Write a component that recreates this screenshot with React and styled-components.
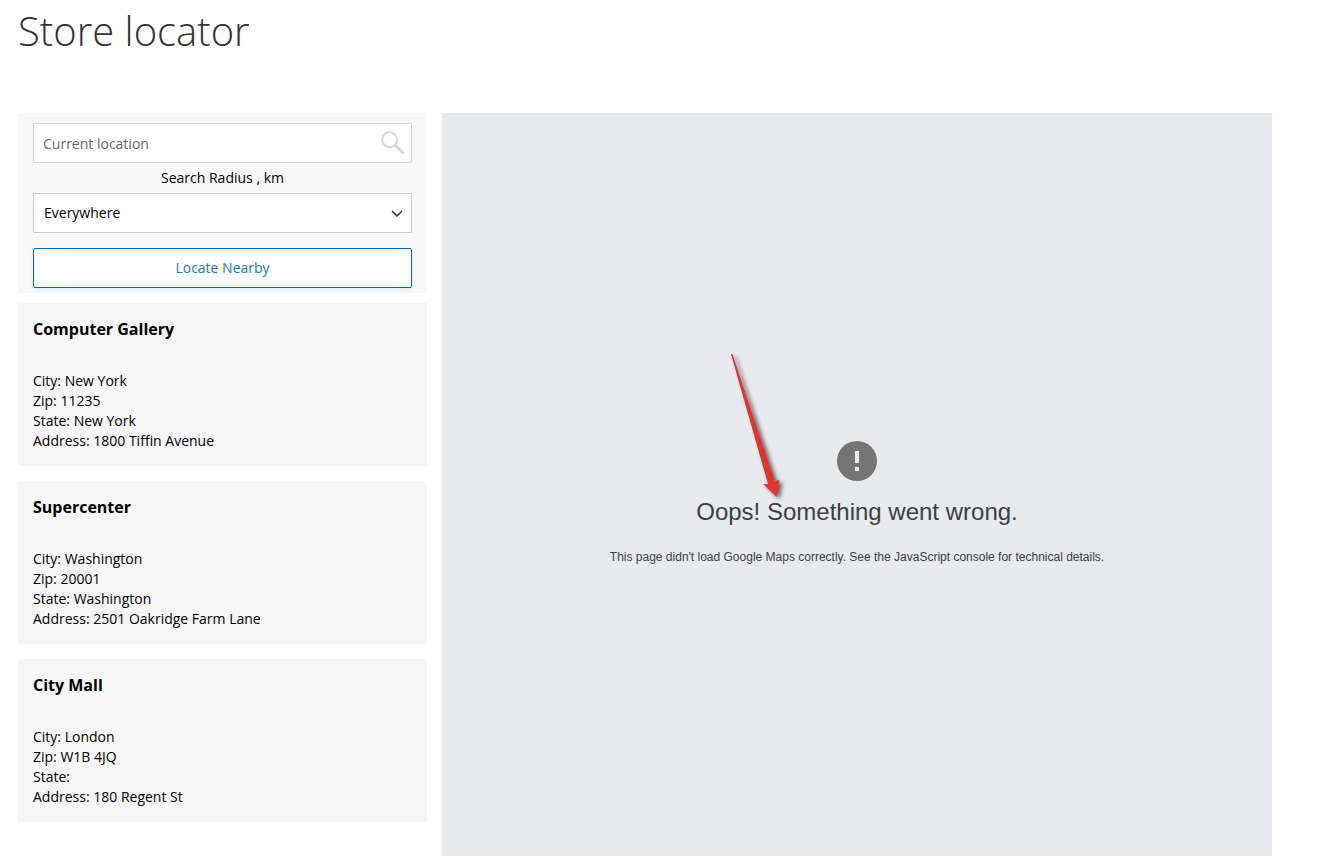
import { useState } from "react";
import styled, { createGlobalStyle } from "styled-components";

const stores = [
  { name: "Computer Gallery", city: "New York", zip: "11235", state: "New York", address: "1800 Tiffin Avenue" },
  { name: "Supercenter", city: "Washington", zip: "20001", state: "Washington", address: "2501 Oakridge Farm Lane" },
  { name: "City Mall", city: "London", zip: "W1B 4JQ", state: "", address: "180 Regent St" },
];

export default function App() {
  const [location, setLocation] = useState("");

  return (
    <Page>
      <GlobalStyle />
      <Title>Store locator</Title>
      <Content>
        <Sidebar>
          <SearchForm onSubmit={(e) => e.preventDefault()}>
            <SearchField>
              <SearchInput
                type="text"
                aria-label="Current location"
                placeholder="Current location"
                value={location}
                onChange={(e) => setLocation(e.target.value)}
              />
              <SearchButton type="submit" aria-label="Search">
                <svg width="24" height="24" viewBox="0 0 24 24" fill="none" stroke="#d6d6d6">
                  <circle cx="8.7" cy="8.7" r="7.5" strokeWidth="2" />
                  <path d="M14 14L22.5 22.3" strokeWidth="3" />
                </svg>
              </SearchButton>
            </SearchField>
            <RadiusLabel htmlFor="radius">Search Radius , km</RadiusLabel>
            <SelectField>
              <Select id="radius" defaultValue="all">
                <option value="all">Everywhere</option>
                <option value="10">10</option>
                <option value="50">50</option>
              </Select>
              <svg width="12" height="8" viewBox="0 0 12 8" fill="none" stroke="#333" strokeWidth="1.5">
                <path d="M1 2L6 7L11 2" />
              </svg>
            </SelectField>
            <LocateButton type="button">Locate Nearby</LocateButton>
          </SearchForm>
          <StoreList>
            {stores.map((store) => (
              <StoreCard key={store.name}>
                <h2>{store.name}</h2>
                <p>City: {store.city}</p>
                <p>Zip: {store.zip}</p>
                <p>State: {store.state}</p>
                <p>Address: {store.address}</p>
              </StoreCard>
            ))}
          </StoreList>
        </Sidebar>
        <Map>
          <MapError>
            <svg width="40" height="40" viewBox="0 0 40 40">
              <circle cx="20" cy="20" r="20" fill="#757575" />
              <path d="M18 10h4v12h-4zM18 26h4v4h-4z" fill="#e8eaed" />
            </svg>
            <h2>Oops! Something went wrong.</h2>
            <p>This page didn't load Google Maps correctly. See the JavaScript console for technical details.</p>
            <Arrow width="60" height="154" viewBox="0 0 60 154" aria-hidden="true">
              <path d="M5 4L6.5 4L48.7 131.5L53.3 129.7L50.8 147L37.2 134.300L42 134Z" fill="#e23331" />
            </Arrow>
          </MapError>
        </Map>
      </Content>
    </Page>
  );
}

const GlobalStyle = createGlobalStyle`
  * {
    box-sizing: border-box;
  }
  body {
    margin: 0;
    background: #fff;
    color: #000;
    font-family: "Open Sans", "Noto Sans", sans-serif;
    font-size: 14px;
    line-height: 20px;
  }
  h1, h2, p {
    margin: 0;
  }
  button, input, select {
    font: inherit;
  }
`;

const Page = styled.div`
  display: flex;
  flex-direction: column;
  min-height: 100vh;
  padding: 9px 70px 0 18px;
`;

const Title = styled.h1`
  margin-bottom: 60px;
  color: #333;
  font-size: 40px;
  font-weight: 300;
  line-height: 44px;
`;

const Content = styled.main`
  display: flex;
  flex: 1;
  gap: 15px;
`;

const Sidebar = styled.div`
  flex: 0 0 409px;
`;

const SearchForm = styled.form`
  display: flex;
  flex-direction: column;
  margin-bottom: 10px;
  padding: 10px 15px 5px;
  background: #f8f8f8;
`;

const SearchField = styled.div`
  display: flex;
  align-items: center;
  height: 40px;
  padding: 2px 6px 0 9px;
  border: 1px solid #d6d6d6;
  border-radius: 1px;
  background: #fff;
`;

const SearchInput = styled.input`
  flex: 1;
  min-width: 0;
  padding: 0;
  border: none;
  outline: none;
  background: transparent;
  &::placeholder {
    color: #666;
  }
`;

const SearchButton = styled.button`
  display: flex;
  padding: 0 0 2px;
  border: none;
  background: none;
  cursor: pointer;
`;

const RadiusLabel = styled.label`
  line-height: 30px;
  text-align: center;
`;

const SelectField = styled.div`
  display: grid;
  align-items: center;
  height: 40px;
  margin-bottom: 15px;
  > * {
    grid-area: 1 / 1;
  }
  svg {
    justify-self: end;
    margin-right: 9px;
    pointer-events: none;
  }
`;

const Select = styled.select`
  width: 100%;
  height: 40px;
  padding: 0 30px 0 10px;
  border: 1px solid #ccc;
  border-radius: 1px;
  background: #fff;
  color: #000;
  appearance: none;
`;

const LocateButton = styled.button`
  height: 40px;
  border: 1px solid #006bb4;
  border-radius: 2px;
  background: #fff;
  box-shadow: 0 2px 4px rgba(0, 107, 180, 0.08);
  color: #1979c3;
  cursor: pointer;
`;

const StoreList = styled.div`
  display: flex;
  flex-direction: column;
  gap: 15px;
`;

const StoreCard = styled.section`
  padding: 15px;
  background: #f6f6f6;
  h2 {
    margin-bottom: 31px;
    font-size: 16px;
    font-weight: 700;
    line-height: 22px;
  }
`;

const Map = styled.div`
  flex: 1;
  min-width: 0;
  padding-top: 328px;
  background: #e8eaed;
`;

const MapError = styled.div`
  position: relative;
  display: flex;
  flex-direction: column;
  align-items: center;
  color: #3c4043;
  font-family: "Liberation Sans", Arial, sans-serif;
  text-align: center;
  h2 {
    margin: 16px 0 24px;
    font-size: 24px;
    font-weight: 400;
    line-height: 30px;
  }
  p {
    font-size: 12px;
    line-height: 12px;
  }
`;

/* Pointer laid over the map, aimed at the error heading */
const Arrow = styled.svg`
  position: absolute;
  top: -91px;
  left: calc(50% - 131px);
  overflow: visible;
  filter: drop-shadow(3px 2px 2px rgba(0, 0, 0, 0.6));
`;
